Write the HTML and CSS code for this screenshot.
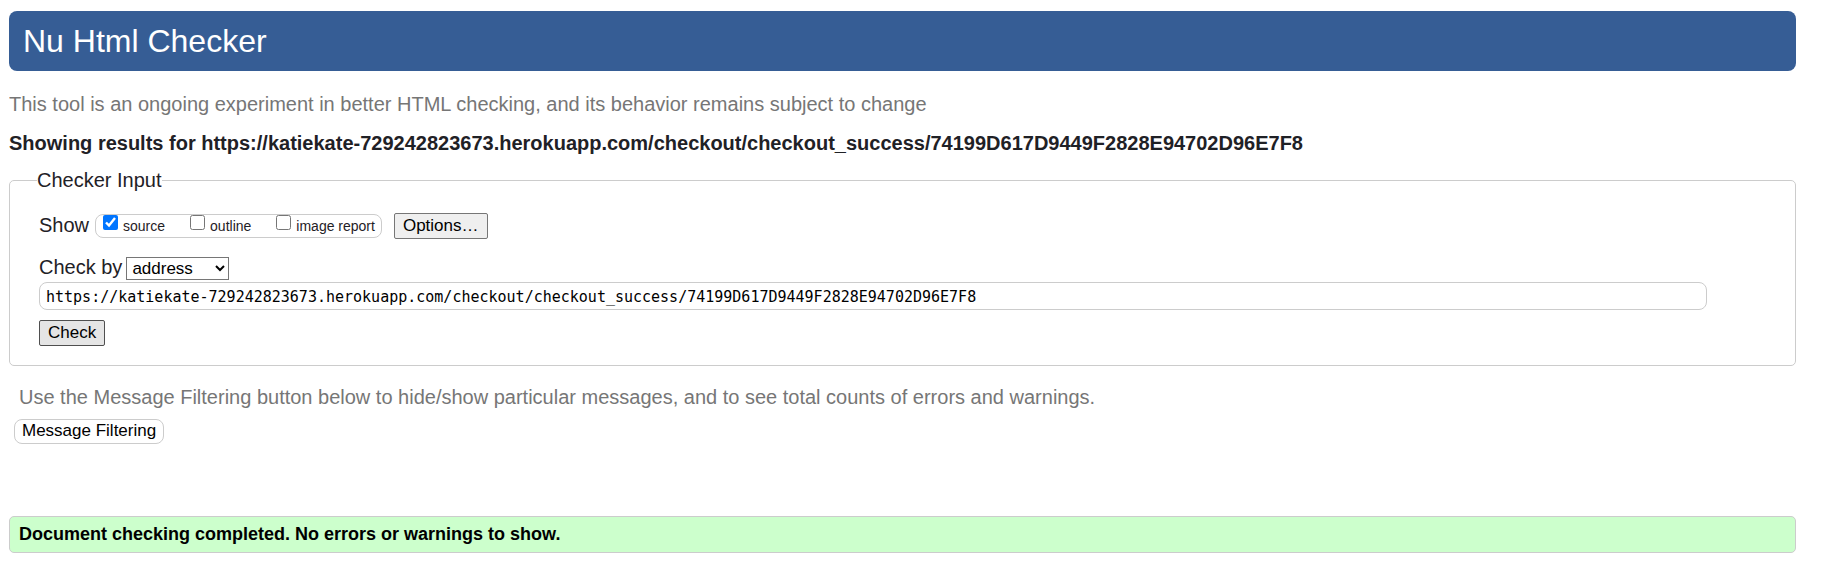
FILE: index.html
```html
<!DOCTYPE html>
<html lang="en">
<head>
<meta charset="utf-8">
<title>Nu Html Checker</title>
<link rel="stylesheet" href="styles.css">
</head>
<body>
<header class="banner"><h1 class="banner-title">Nu Html Checker</h1></header>
<main>
<p class="note">This tool is an ongoing experiment in better HTML checking, and its behavior remains subject to change</p>
<h2 class="results-title">Showing results for https://katiekate-729242823673.herokuapp.com/checkout/checkout_success/74199D617D9449F2828E94702D96E7F8</h2>
<form>
<fieldset class="checker">
<legend class="checker-legend">Checker Input</legend>
<div class="show-row">
<span>Show</span>
<div class="show-options">
<label class="option"><input class="tick" type="checkbox" checked><span>source</span></label>
<label class="option"><input class="tick" type="checkbox"><span>outline</span></label>
<label class="option"><input class="tick" type="checkbox"><span>image report</span></label>
</div>
<button class="button" type="button">Options…</button>
</div>
<div class="mode-row">
<label for="mode">Check by</label>
<select class="mode" id="mode"><option>address</option></select>
</div>
<input class="address" type="text" aria-label="Address" spellcheck="false" value="https://katiekate-729242823673.herokuapp.com/checkout/checkout_success/74199D617D9449F2828E94702D96E7F8">
<button class="button button-check" type="button">Check</button>
</fieldset>
</form>
<p class="note filter-note">Use the Message Filtering button below to hide/show particular messages, and to see total counts of errors and warnings.</p>
<button class="filter-button" type="button">Message Filtering</button>
<p class="success">Document checking completed. No errors or warnings to show.</p>
</main>
</body>
</html>
```
FILE: styles.css
```css
* {
  box-sizing: border-box;
}

body {
  margin: 11px 43px 10px 9px;
  background: #fff;
  color: #1f2126;
  font: 20px/24px "Liberation Sans", Arial, sans-serif;
}

.banner {
  padding: 12px 14px;
  border-radius: 8px;
  background: #365d95;
  color: #fff;
}

.banner-title {
  margin: 0;
  font-size: 32px;
  font-weight: normal;
  line-height: 36px;
}

.note {
  margin: 21px 0 0;
  color: #767676;
}

.results-title {
  margin: 15px 0 13px;
  font-size: 20px;
  line-height: 24px;
  overflow-wrap: anywhere;
}

.checker {
  display: flex;
  flex-direction: column;
  align-items: flex-start;
  min-width: 0;
  margin: 0;
  padding: 21px 88px 19px 29px;
  border: 1px solid #ccc;
  border-radius: 5px;
}

.checker-legend {
  margin-left: -2px;
  padding: 0;
}

.show-row {
  display: flex;
  align-items: flex-start;
  margin-bottom: 16px;
}

.show-options {
  display: flex;
  gap: 25px;
  height: 24px;
  margin: 1px 12px 0 6px;
  padding: 0 6px 0 7px;
  border: 1px solid #ccc;
  border-radius: 8px;
  font-size: 14px;
  line-height: 22px;
}

.option {
  display: flex;
  gap: 5px;
}

.tick {
  width: 15px;
  height: 15px;
  margin: 0;
}

.button {
  height: 26px;
  padding: 0 8px;
  border: 1px solid #767676;
  border-radius: 2px;
  background: #efefef;
  color: #000;
  font: 17px/22px "Liberation Sans", Arial, sans-serif;
}

.button-check {
  border-color: #4f4f4f;
  background: #e5e5e5;
}

.mode-row {
  display: flex;
  align-items: flex-start;
  gap: 4px;
  margin-bottom: 2px;
}

.mode {
  width: 103px;
  height: 23px;
  margin-top: 2px;
  padding: 0 1px;
  border: 1px solid #767676;
  border-radius: 0;
  background: #fff;
  color: #000;
  font: 17px/20px "Liberation Sans", Arial, sans-serif;
}

.address {
  width: 100%;
  height: 28px;
  margin-bottom: 10px;
  padding: 1px 6px 0;
  border: 1px solid #ccc;
  border-radius: 8px;
  color: #000;
  font: 15px/24px "DejaVu Sans Mono", monospace;
}

.filter-note {
  margin: 19px 0 10px 10px;
}

.filter-button {
  display: block;
  height: 25px;
  margin-left: 5px;
  padding: 0 7px 2px;
  border: 1px solid #ccc;
  border-radius: 8px;
  background: #fff;
  color: #000;
  font: 17px/20px "Liberation Sans", Arial, sans-serif;
}

.success {
  margin: 72px 0 0;
  padding: 5px 9px 6px;
  border: 1px solid #ccc;
  border-radius: 5px;
  background: #cfc;
  color: #000;
  font-size: 18px;
  font-weight: bold;
}
```
